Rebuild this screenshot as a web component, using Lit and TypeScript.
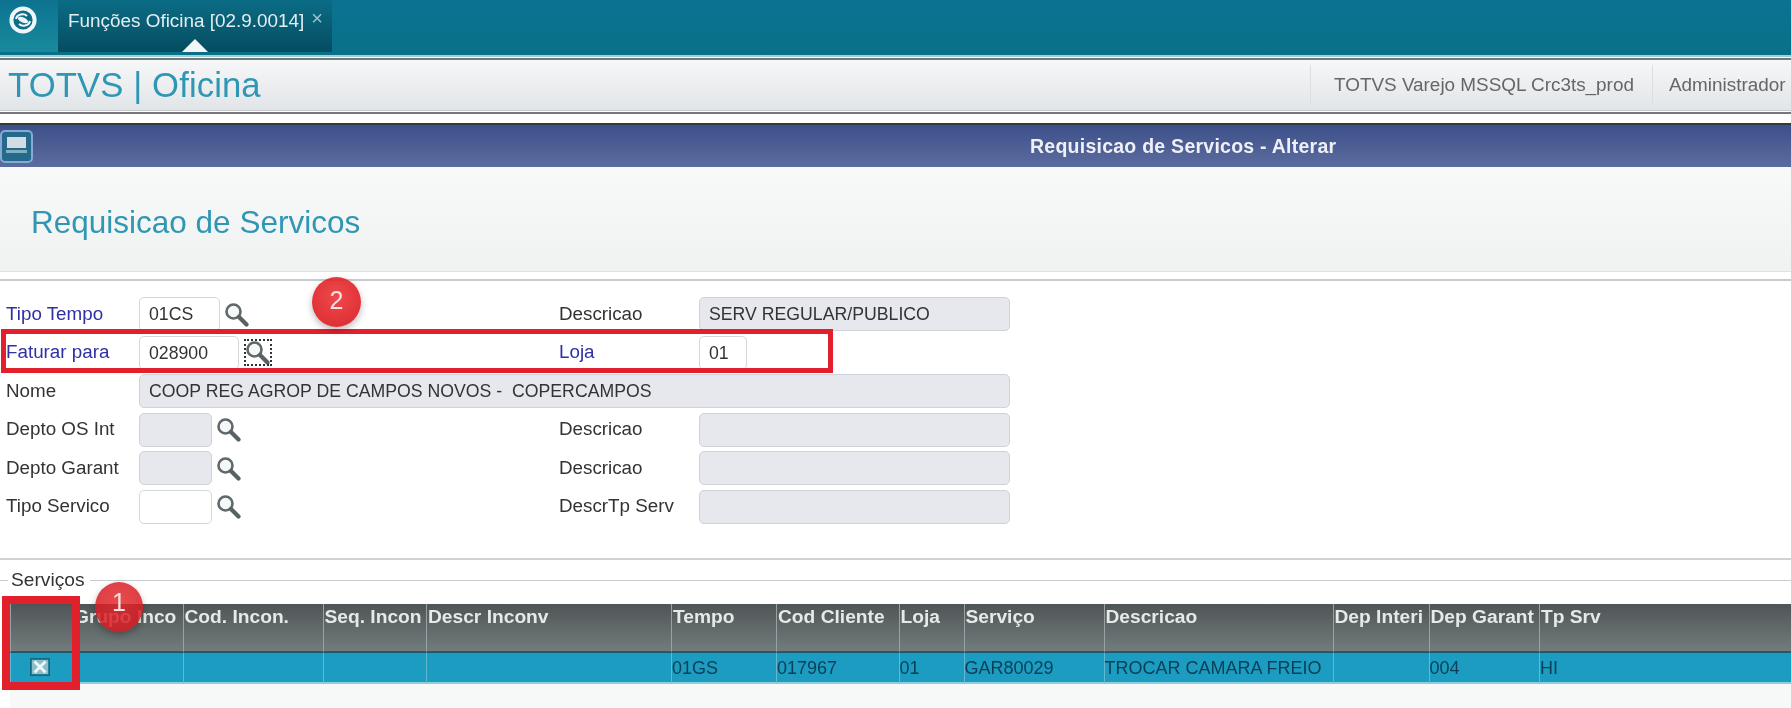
import { LitElement, html, css, svg } from "lit";
import { customElement } from "lit/decorators.js";

const cols = [
  { w: 62, h: "", v: "" },
  { w: 110.5, h: "Grupo Inco", v: "" },
  { w: 140, h: "Cod. Incon.", v: "" },
  { w: 103.5, h: "Seq. Incon", v: "" },
  { w: 245, h: "Descr Inconv", v: "" },
  { w: 105, h: "Tempo", v: "01GS" },
  { w: 122.5, h: "Cod Cliente", v: "017967" },
  { w: 65, h: "Loja", v: "01" },
  { w: 140, h: "Serviço", v: "GAR80029" },
  { w: 229, h: "Descricao", v: "TROCAR CAMARA FREIO" },
  { w: 96, h: "Dep Interi", v: "" },
  { w: 110.5, h: "Dep Garant", v: "004" },
  { w: 252, h: "Tp Srv", v: "HI" },
];

const lens = svg`<svg class="lens" viewBox="0 0 25 25" aria-hidden="true">
  <circle cx="9.5" cy="9.5" r="7" fill="#f6f8f8" stroke="#5f686b" stroke-width="2.6"/>
  <path d="M15 15 L22.5 22.5" stroke="#586164" stroke-width="4.2" stroke-linecap="round"/>
</svg>`;

@customElement("app-root")
export class AppRoot extends LitElement {
  static styles = css`
    :host {
      display: block;
      position: relative;
      width: 1791px;
      height: 708px;
      overflow: hidden;
      background: #fff;
      font-family: "Liberation Sans", Arial, sans-serif;
      color: #333;
      filter: blur(0.45px);
    }
    .top {
      height: 55px;
      display: flex;
      background: linear-gradient(#0b7391, #0a7089);
    }
    .logo {
      width: 58px;
      height: 52px;
      display: flex;
      justify-content: center;
      padding-top: 5px;
      box-sizing: border-box;
      padding-right: 12px;
      background: linear-gradient(#0d7390, #188a9e);
    }
    .logo svg { width: 30px; height: 30px; }
    .tab {
      width: 274px;
      height: 52px;
      box-sizing: border-box;
      padding: 10px 0 0 10px;
      display: flex;
      gap: 7px;
      position: relative;
      font-size: 18.9px;
      line-height: 22px;
      color: #e3eef1;
      background: linear-gradient(#0b6c85, #054d61);
    }
    .tab .x { color: #9fc2cc; font-size: 20px; line-height: 17px; }
    .tab .tri {
      position: absolute;
      left: 124px;
      bottom: 0;
      width: 0;
      height: 0;
      border-left: 13px solid transparent;
      border-right: 13px solid transparent;
      border-bottom: 13px solid #f2f6f7;
    }
    .rule-a { height: 2px; background: #9fd0d8; }
    .rule-b { height: 3px; background: linear-gradient(#fff 0 33%, #70787a 33%); }
    .head {
      height: 50px;
      display: flex;
      align-items: center;
      background: linear-gradient(#f6f7f8, #e2e5e8);
      border-bottom: 1px solid #c4c8cb;
    }
    .brand {
      flex: 1;
      font-size: 34.7px;
      color: #2f97b4;
      padding-left: 8px;
      letter-spacing: 0.1px;
    }
    .ctx {
      height: 40px;
      display: flex;
      align-items: center;
      font-size: 18.9px;
      color: #666;
      border-left: 1px solid #dcdfe2;
      white-space: nowrap;
    }
    .ctx.db { width: 342px; padding-left: 23px; box-sizing: border-box; }
    .ctx.user { width: 139px; padding-left: 16px; box-sizing: border-box; }
    .rule-c { height: 3px; background: linear-gradient(#fff 0 33%, #777 33%); }
    .gap { height: 9px; background: #fff; }
    .bar {
      height: 44px;
      box-sizing: border-box;
      border-top: 2px solid #34393f;
      display: flex;
      align-items: center;
      background: linear-gradient(#3d5089, #5c6c9f);
      color: #eef0f6;
      font-weight: 700;
      font-size: 19.5px;
      letter-spacing: 0.25px;
    }
    .bar svg { width: 33px; height: 33px; margin-right: 997px; flex: none; }
    .page {
      height: 105px;
      box-sizing: border-box;
      padding: 38px 0 0 31px;
      font-size: 31.5px;
      line-height: 34px;
      color: #2f97b4;
      background: linear-gradient(#f8f9f9, #f0f2f2);
      border-bottom: 1px solid #dfe1e2;
    }
    .line { height: 2px; background: #c9cccd; margin-top: 7px; }
    .form {
      display: grid;
      grid-template-columns: 139px 420px 140px 311px;
      grid-auto-rows: 34px;
      row-gap: 4.6px;
      padding-top: 16px;
      align-items: center;
      font-size: 18.8px;
    }
    .lbl { padding-left: 6px; margin-top: -1px; white-space: nowrap; }
    .lbl.r { padding-left: 0; }
    .blue { color: #2f2fa6; }
    .cell { display: flex; align-items: center; gap: 4px; }
    .in {
      height: 34px;
      box-sizing: border-box;
      padding: 1px 0 0 9px;
      border: 1px solid #d4d7da;
      border-radius: 5px;
      display: flex;
      align-items: center;
      white-space: pre;
      background: #fff;
      font-size: 17.7px;
      flex: none;
    }
    .off { background: #e6e8ed; border-color: #cfd2d6; }
    .w81 { width: 81px; }
    .w100 { width: 100px; }
    .w73 { width: 73px; }
    .w48 { width: 48px; }
    .w311 { width: 311px; }
    .nome { grid-column: 2 / 5; width: 871px; }
    .lens { width: 25px; height: 25px; flex: none; }
    .focus {
      display: flex;
      width: 26px;
      height: 25px;
      margin-left: 2px;
      outline: 2px dotted #333;
      outline-offset: -1px;
    }
    .sep { height: 2px; background: #cfd2d3; margin-top: 34px; }
    .legend {
      height: 44px;
      position: relative;
      font-size: 19.2px;
    }
    .legend::before {
      content: "";
      position: absolute;
      left: 0;
      right: 0;
      top: 20px;
      height: 1.5px;
      background: #c9cccd;
    }
    .legend span {
      position: absolute;
      left: 8px;
      top: 10px;
      padding: 0 5px 0 3px;
      background: #fff;
      line-height: 20px;
    }
    .tbl { padding-left: 10px; }
    .tr { display: flex; }
    .th {
      height: 49px;
      box-sizing: border-box;
      padding: 3px 0 0 1px;
      font-size: 19.2px;
      font-weight: 700;
      line-height: 20px;
      color: #e4e9ea;
      white-space: nowrap;
      overflow: hidden;
      flex: none;
      background: linear-gradient(#4f5556, #727c7c);
      border-left: 1.5px solid #98a2a3;
      border-bottom: 2px solid #1e5a6c;
    }
    .td {
      height: 31px;
      box-sizing: border-box;
      padding: 3px 0 0 0;
      display: flex;
      align-items: center;
      font-size: 18px;
      color: #0c4058;
      white-space: nowrap;
      flex: none;
      background: #1c9cc0;
      border-left: 1.5px solid #63b8cf;
      border-bottom: 2px solid #8ecfdf;
    }
    .check { width: 20px; height: 18px; margin: -3px 0 0 18.5px; }
    .rest { height: 26px; margin-left: 10px; background: #f7f8f8; }
    .box {
      position: absolute;
      box-sizing: border-box;
      border-style: solid;
      border-color: #e2202c;
    }
    .box.one { left: 2px; top: 596px; width: 78px; height: 94px; border-width: 8px; }
    .box.two { left: 1px; top: 329px; width: 832px; height: 44px; border-width: 5px; }
    .badge {
      position: absolute;
      display: flex;
      align-items: center;
      justify-content: center;
      border-radius: 50%;
      font-size: 25px;
      color: #f6e3e3;
      background: radial-gradient(circle at 50% 40%, rgba(236, 48, 50, 0.88), rgba(214, 22, 30, 0.92));
      box-shadow: 0 3px 7px rgba(0, 0, 0, 0.28);
    }
    .badge.one {
      left: 95px;
      top: 582px;
      width: 48px;
      height: 50px;
      box-sizing: border-box;
      padding-bottom: 10px;
      background: radial-gradient(circle at 50% 40%, rgba(228, 40, 44, 0.84), rgba(208, 22, 30, 0.86));
    }
    .badge.two { left: 312px; top: 277px; width: 49px; height: 50px; box-sizing: border-box; padding-bottom: 4px; }
  `;

  render() {
    return html`
      <div class="top">
        <div class="logo">
          <svg viewBox="0 0 30 30" aria-hidden="true">
            <circle cx="15" cy="15" r="11.6" fill="#0d6d88" stroke="#eef6f7" stroke-width="4"/>
            <path d="M8 14 C9 9 16 8 19 11" fill="none" stroke="#eef6f7" stroke-width="2"/>
            <path d="M22 16 C21 21 14 22 11 19" fill="none" stroke="#eef6f7" stroke-width="2"/>
            <ellipse cx="15" cy="15" rx="5.5" ry="2.6" transform="rotate(25 15 15)" fill="#eef6f7"/>
          </svg>
        </div>
        <div class="tab">
          <span>Funções Oficina [02.9.0014]</span><span class="x">×</span>
          <div class="tri"></div>
        </div>
      </div>
      <div class="rule-a"></div>
      <div class="rule-b"></div>
      <div class="head">
        <div class="brand">TOTVS | Oficina</div>
        <div class="ctx db">TOTVS Varejo MSSQL Crc3ts_prod</div>
        <div class="ctx user">Administrador</div>
      </div>
      <div class="rule-c"></div>
      <div class="gap"></div>
      <div class="bar">
        <svg viewBox="0 0 33 33" aria-hidden="true">
          <rect x="1" y="1" width="31" height="31" rx="4" fill="#256a8c" stroke="#86aad4" stroke-width="2"/>
          <rect x="7" y="7" width="19" height="11" fill="#d3dce2"/>
          <rect x="6" y="20" width="21" height="3" fill="#7fb0c2"/>
        </svg>
        <span>Requisicao de Servicos - Alterar</span>
      </div>
      <div class="page">Requisicao de Servicos</div>
      <div class="line"></div>
      <div class="form">
        <div class="lbl blue">Tipo Tempo</div>
        <div class="cell"><div class="in w81">01CS</div>${lens}</div>
        <div class="lbl r">Descricao</div>
        <div class="in off w311">SERV REGULAR/PUBLICO</div>

        <div class="lbl blue">Faturar para</div>
        <div class="cell"><div class="in w100">028900</div><span class="focus">${lens}</span></div>
        <div class="lbl r blue">Loja</div>
        <div class="cell"><div class="in w48">01</div></div>

        <div class="lbl">Nome</div>
        <div class="in off nome">COOP REG AGROP DE CAMPOS NOVOS -  COPERCAMPOS</div>

        <div class="lbl">Depto OS Int</div>
        <div class="cell"><div class="in off w73"></div>${lens}</div>
        <div class="lbl r">Descricao</div>
        <div class="in off w311"></div>

        <div class="lbl">Depto Garant</div>
        <div class="cell"><div class="in off w73"></div>${lens}</div>
        <div class="lbl r">Descricao</div>
        <div class="in off w311"></div>

        <div class="lbl">Tipo Servico</div>
        <div class="cell"><div class="in w73"></div>${lens}</div>
        <div class="lbl r">DescrTp Serv</div>
        <div class="in off w311"></div>
      </div>
      <div class="sep"></div>
      <div class="legend"><span>Serviços</span></div>
      <div class="tbl">
        <div class="tr">
          ${cols.map((c) => html`<div class="th" style="width:${c.w}px">${c.h}</div>`)}
        </div>
        <div class="tr">
          ${cols.map(
            (c, i) => html`<div class="td" style="width:${c.w}px">
              ${i === 0
                ? html`<svg class="check" viewBox="0 0 20 18" aria-hidden="true">
                    <rect x="0.75" y="0.75" width="18.5" height="16.5" fill="#3f93a8" stroke="#15697f" stroke-width="1.5"/>
                    <rect x="2" y="2" width="16" height="14" fill="#c6e2e7" opacity="0.55"/>
                    <path d="M4.5 3.5 L15.5 14.5 M15.5 3.5 L4.5 14.5" stroke="#f0f5f5" stroke-width="3"/>
                  </svg>`
                : c.v}
            </div>`
          )}
        </div>
      </div>
      <div class="rest"></div>
      <div class="box two"></div>
      <div class="box one"></div>
      <div class="badge two">2</div>
      <div class="badge one">1</div>
    `;
  }
}
